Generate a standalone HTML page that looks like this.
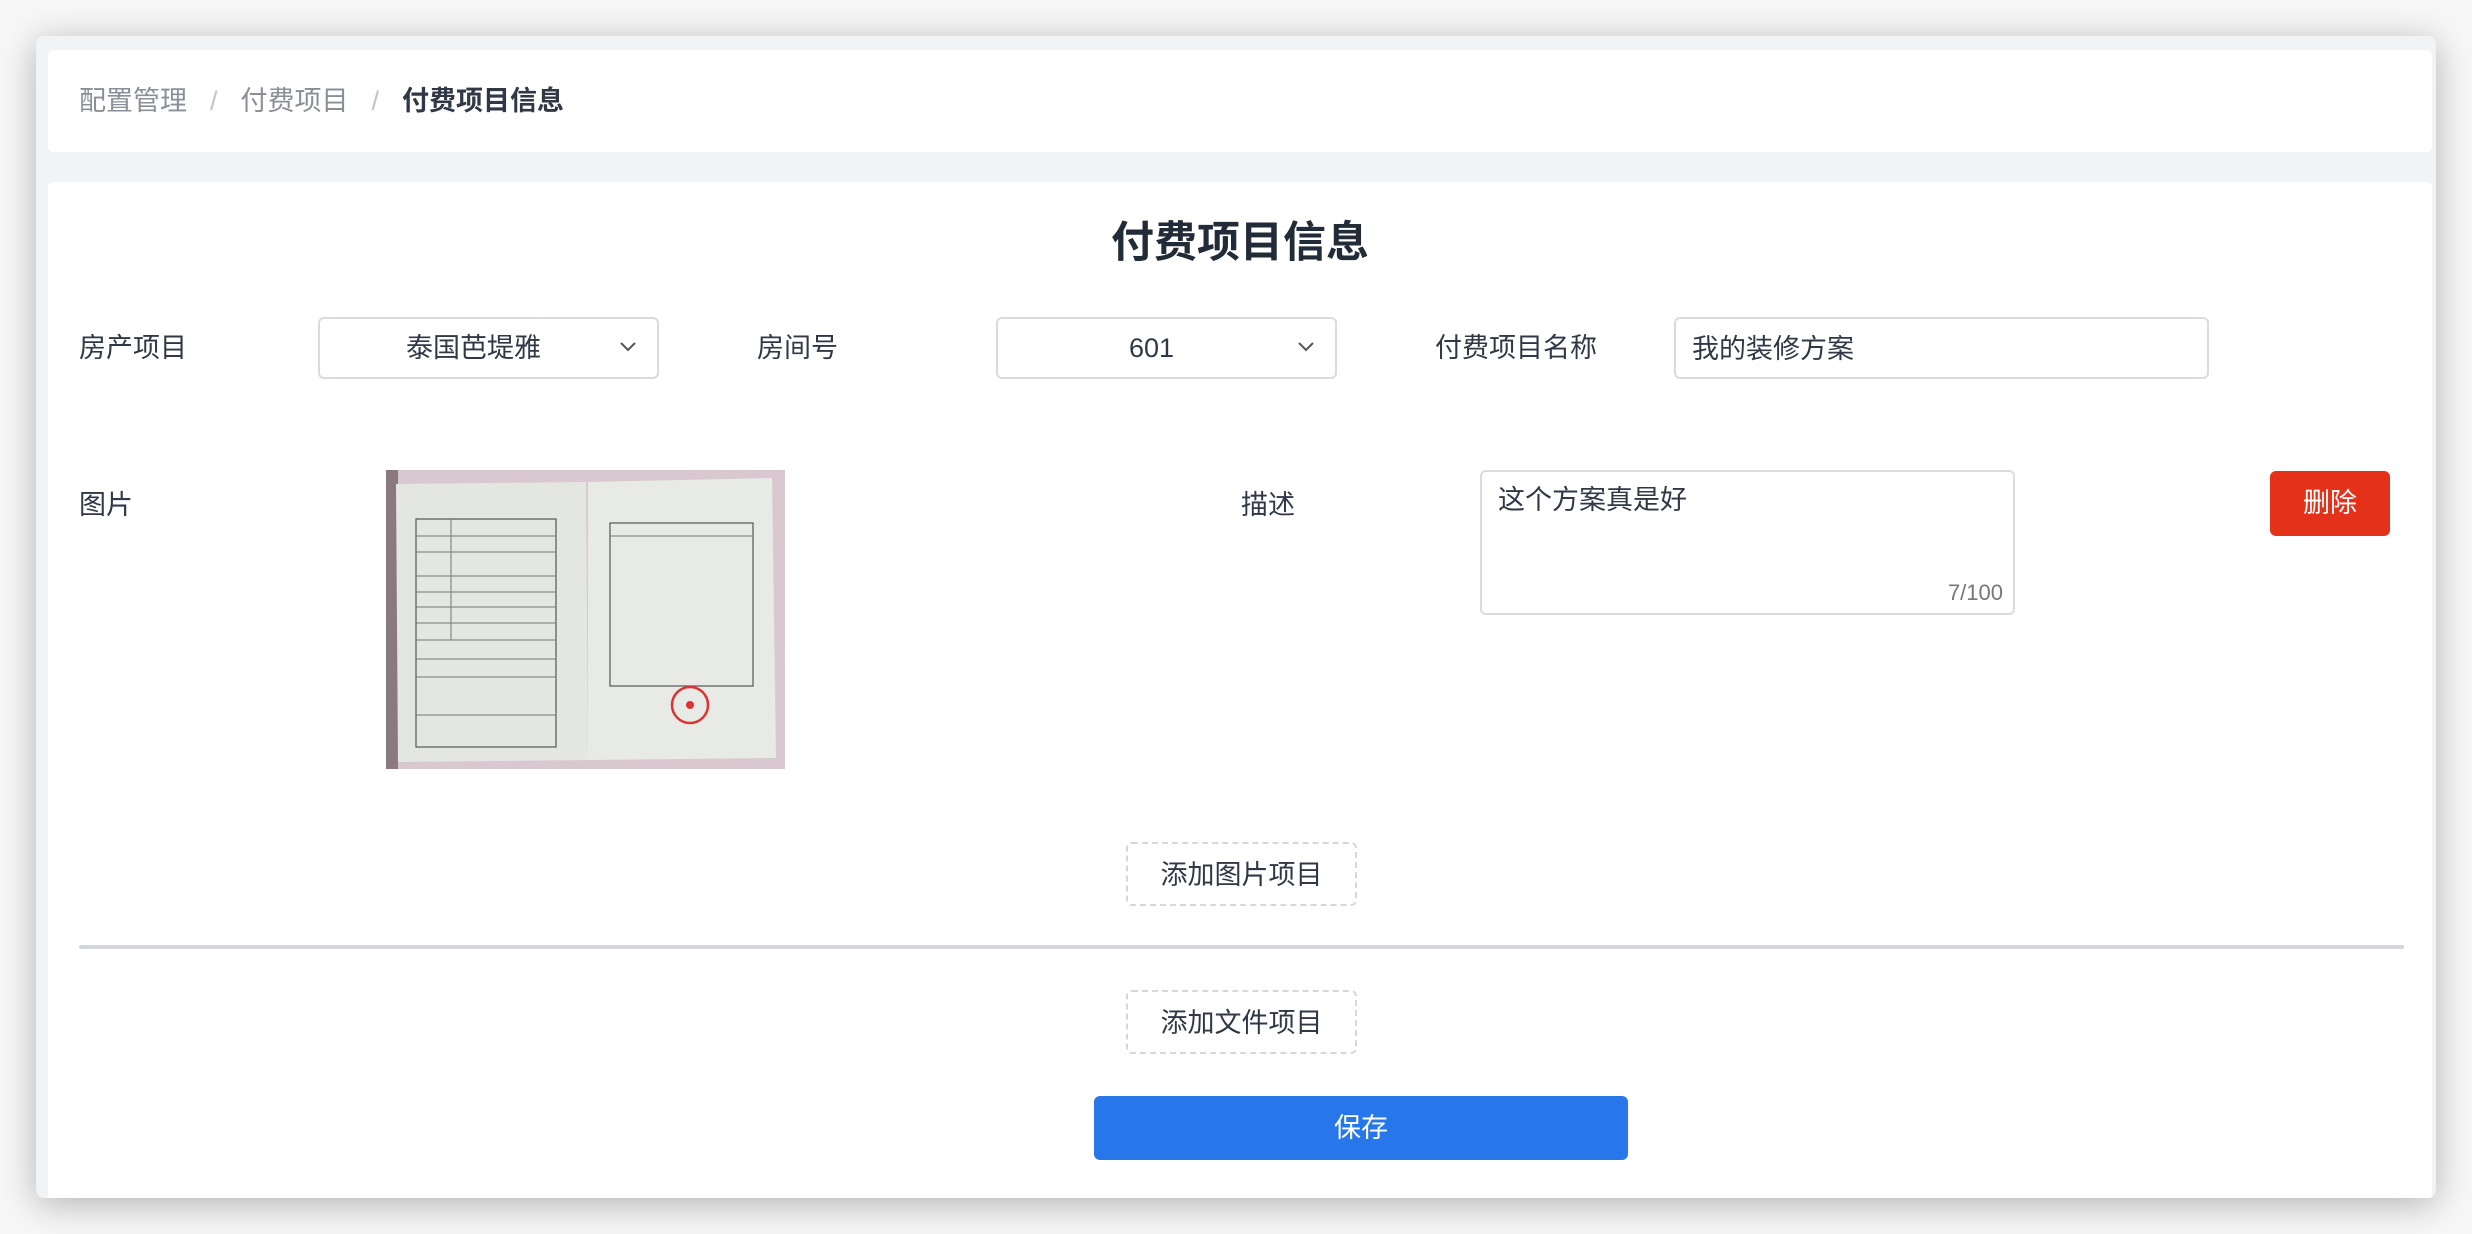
<!DOCTYPE html>
<html><head><meta charset="utf-8"><style>
*{box-sizing:border-box;margin:0;padding:0}
body{width:2472px;height:1234px;background:#f7f7f7;font-family:"Liberation Sans","Noto Sans CJK SC",sans-serif;color:#303846;position:relative;overflow:hidden}
.win{position:absolute;left:36px;top:36px;width:2400px;height:1162px;background:#f0f4f7;border-radius:8px;box-shadow:0 6px 36px rgba(0,0,0,.28);overflow:hidden}
.crumb{position:absolute;left:12px;top:14px;width:2384px;height:102px;background:#fff;border-radius:6px;font-size:27px;line-height:102px;padding-left:31px;color:#8a8f97}
.crumb .sep{color:#c0c4cc;margin:0 23px}
.crumb b{color:#303846;font-weight:bold}
.card{position:absolute;left:12px;top:146px;width:2384px;height:1040px;background:#fff;border-radius:6px}
.a{position:absolute}
.lbl{font-size:27px;line-height:40px}
.box{position:absolute;border:2px solid #d8dbe0;border-radius:6px;background:#fff;font-size:27px}
.btn{position:absolute;border:2px dashed #d4d7dc;border-radius:6px;font-size:27px;text-align:center;color:#303846}
</style></head><body>
<div class="win">
<div class="crumb">配置管理<span class="sep">/</span>付费项目<span class="sep">/</span><b>付费项目信息</b></div>
<div class="card">
<div class="a" style="left:0;width:2384px;top:31px;text-align:center;font-size:43px;font-weight:bold;color:#222b38;line-height:60px">付费项目信息</div>
<div class="a lbl" style="left:31px;top:146px">房产项目</div>
<div class="box" style="left:270px;top:135px;width:341px;height:62px;line-height:58px;text-align:center;padding-right:30px">泰国芭堤雅<svg class="a" style="right:20px;top:22px" width="18" height="12" viewBox="0 0 18 12"><path d="M2 2l7 7 7-7" fill="none" stroke="#555" stroke-width="2"/></svg></div>
<div class="a lbl" style="left:709px;top:146px">房间号</div>
<div class="box" style="left:948px;top:135px;width:341px;height:62px;line-height:58px;text-align:center;padding-right:30px">601<svg class="a" style="right:20px;top:22px" width="18" height="12" viewBox="0 0 18 12"><path d="M2 2l7 7 7-7" fill="none" stroke="#555" stroke-width="2"/></svg></div>
<div class="a lbl" style="left:1387px;top:146px">付费项目名称</div>
<div class="box" style="left:1626px;top:135px;width:535px;height:62px;line-height:60px;padding-left:16px">我的装修方案</div>

<div class="a lbl" style="left:31px;top:303px">图片</div>
<svg class="a" style="left:338px;top:288px" width="399" height="299" viewBox="0 0 399 299">
<rect width="399" height="299" fill="#dac8d0"/>
<rect x="0" y="0" width="12" height="299" fill="#8a7a80"/>
<polygon points="10,14 200,12 202,290 12,292" fill="#e4e7e1"/>
<polygon points="202,12 386,8 390,288 202,290" fill="#e8eae5"/>
<rect x="30" y="49" width="140" height="228" fill="none" stroke="#555" stroke-width="1.2"/>
<g stroke="#777" stroke-width="1"><line x1="30" y1="66" x2="170" y2="66"/><line x1="30" y1="82" x2="170" y2="82"/><line x1="30" y1="106" x2="170" y2="106"/><line x1="30" y1="122" x2="170" y2="122"/><line x1="30" y1="137" x2="170" y2="137"/><line x1="30" y1="153" x2="170" y2="153"/><line x1="30" y1="170" x2="170" y2="170"/><line x1="30" y1="189" x2="170" y2="189"/><line x1="30" y1="207" x2="170" y2="207"/><line x1="30" y1="245" x2="170" y2="245"/><line x1="65" y1="49" x2="65" y2="170"/></g>
<rect x="224" y="53" width="143" height="163" fill="none" stroke="#555" stroke-width="1.2"/>
<line x1="224" y1="66" x2="367" y2="66" stroke="#777"/>
<circle cx="304" cy="235" r="18" fill="none" stroke="#d33" stroke-width="2.5"/>
<circle cx="304" cy="235" r="4" fill="#d33"/>
</svg>
<div class="a lbl" style="left:1193px;top:303px">描述</div>
<div class="box" style="left:1432px;top:288px;width:535px;height:145px;padding:10px 16px;line-height:36px">这个方案真是好<span class="a" style="right:10px;bottom:2px;font-size:22px;color:#777">7/100</span></div>
<div class="a" style="left:2222px;top:289px;width:120px;height:65px;background:#e4321a;border-radius:6px;color:#fff;font-size:27px;text-align:center;line-height:65px">删除</div>

<div class="btn" style="left:1078px;top:660px;width:231px;height:64px;line-height:62px">添加图片项目</div>
<div class="a" style="left:31px;top:763px;width:2325px;height:4px;background:#d3d7da;border-radius:2px"></div>
<div class="btn" style="left:1078px;top:808px;width:231px;height:64px;line-height:62px">添加文件项目</div>
<div class="a" style="left:1046px;top:914px;width:534px;height:64px;background:#2777ea;border-radius:6px;color:#fff;font-size:27px;text-align:center;line-height:64px">保存</div>
</div>
</div>
</body></html>
